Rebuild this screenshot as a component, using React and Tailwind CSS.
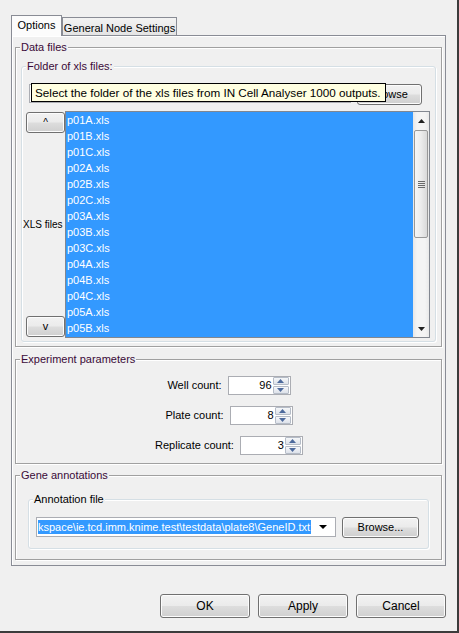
import React from "react";

const files = [
  "p01A.xls","p01B.xls","p01C.xls","p02A.xls","p02B.xls","p02C.xls","p03A.xls",
  "p03B.xls","p03C.xls","p04A.xls","p04B.xls","p04C.xls","p05A.xls","p05B.xls",
];

const btn =
  "flex items-center justify-center rounded-[3px] border border-[#707070] bg-[linear-gradient(#f2f2f2_0%,#ebebeb_48%,#dddddd_52%,#cfcfcf_100%)] shadow-[inset_0_0_0_1px_#fcfcfc] text-black";

function Group({ title, className, children }) {
  return (
    <div className={"relative border border-[#a0a0a0] shadow-[inset_1px_1px_0_#fff,1px_1px_0_#fff] " + className}>
      <span className="absolute left-[4px] top-[-8px] px-[1px] leading-[14px] bg-[#f0f0f0] text-[#3a0a38]">
        {title}
      </span>
      {children}
    </div>
  );
}

function Inner({ title, titleColor, className, children }) {
  return (
    <div className={"relative rounded-[3px] border border-[#d5dfe5] shadow-[inset_1px_1px_0_#fff,1px_1px_0_#fff] " + className}>
      <span className={"absolute left-[4px] top-[-8px] px-[1px] leading-[14px] bg-[#f0f0f0] " + titleColor}>
        {title}
      </span>
      {children}
    </div>
  );
}

function Spinner({ value }) {
  return (
    <div className="flex h-[19px] w-[63px] items-center border border-[#abadb3] bg-white">
      <span className="flex-1 pr-[1px] text-right leading-[17px]">{value}</span>
      <div className="mr-[1px] flex h-[17px] w-[16px] flex-col gap-[1px]">
        <div className="flex h-[8px] items-center justify-center rounded-[1px] border border-[#b5bcc7] bg-[linear-gradient(#f6f7f9,#dde2ea)]">
          <svg width="7" height="4" viewBox="0 0 7 4"><path d="M0 4 L3.5 0 L7 4 Z" fill="#4d6a9c" /></svg>
        </div>
        <div className="flex h-[8px] items-center justify-center rounded-[1px] border border-[#b5bcc7] bg-[linear-gradient(#f6f7f9,#dde2ea)]">
          <svg width="7" height="4" viewBox="0 0 7 4"><path d="M0 0 L3.5 4 L7 0 Z" fill="#4d6a9c" /></svg>
        </div>
      </div>
    </div>
  );
}

function Row({ label, value }) {
  return (
    <div className="flex h-[19px] items-center justify-center gap-[6px]">
      <span className="text-black">{label}</span>
      <Spinner value={value} />
    </div>
  );
}

export default function App() {
  return (
    <div className="relative flex h-[633px] w-[459px] flex-col overflow-hidden border-b-2 border-r-2 border-[#3c3c3c] bg-[#f0f0f0] pl-[11px] pt-[15px] font-['Liberation_Sans',Arial,sans-serif] text-[11px] text-black">
      {/* Tabs */}
      <div className="flex h-[21px] items-end">
        <div className="relative z-10 flex h-[21px] w-[51px] items-center justify-center border border-b-0 border-[#898c95] bg-[#fcfcfc] pb-[1px]">
          Options
        </div>
        <div className="flex h-[19px] w-[115px] items-center justify-center border border-b-0 border-[#898c95] bg-[linear-gradient(#f3f3f3,#e3e3e3)] pt-[2px]">
          General Node Settings
        </div>
      </div>

      {/* Panel */}
      <div className="mt-[-1px] flex h-[531px] w-[435px] flex-col border border-[#898c95] px-[3px] pt-[11px] shadow-[inset_1px_1px_0_#fff]">
        {/* Data files */}
        <Group title="Data files" className="h-[300px] px-[5px] pt-[18px]">
          <Inner title="Folder of xls files:" titleColor="text-[#3a0a38]" className="h-[276px] pt-[17px]">
            <div className="flex h-[21px] items-start pl-[7px]">
              <div className="h-[19px] w-[322px] border border-[#abadb3] bg-white" />
              <div className={btn + " ml-[6px] h-[21px] w-[65px]"}>Browse</div>
            </div>
            <div className="mt-[6px] flex h-[227px] pl-[1px]">
              <div className="flex w-[42px] flex-col items-end justify-between pb-[1px] pt-[1px]">
                <div className={btn + " h-[21px] w-[39px] text-[10px]"}>^</div>
                <span className="w-[42px] whitespace-nowrap text-left text-[10px] leading-[14px]">XLS files</span>
                <div className={btn + " h-[21px] w-[39px]"}>v</div>
              </div>
              <div className="flex h-[227px] w-[365px] border border-[#828790] bg-white">
                <div className="flex flex-1 flex-col bg-[#3399ff] text-white">
                  {files.map((f) => (
                    <div key={f} className="h-[16px] pl-[1px] leading-[16px]">{f}</div>
                  ))}
                </div>
                <div className="flex w-[16px] flex-col items-center bg-[linear-gradient(90deg,#e6e6e6,#f4f4f4_25%,#f4f4f4_75%,#e9e9e9)]">
                  <div className="flex h-[18px] items-center justify-center">
                    <svg width="7" height="4" viewBox="0 0 7 4"><path d="M0 4 L3.5 0 L7 4 Z" fill="#222" /></svg>
                  </div>
                  <div className="flex h-[108px] w-[14px] flex-col items-center justify-center gap-[1px] rounded-[2px] border border-[#989898] bg-[linear-gradient(90deg,#f6f6f6,#ececec_50%,#d9d9d9)]">
                    <div className="h-[1px] w-[7px] bg-[#6a6a6a]" />
                    <div className="h-[1px] w-[7px] bg-[#6a6a6a]" />
                    <div className="h-[1px] w-[7px] bg-[#6a6a6a]" />
                    <div className="h-[1px] w-[7px] bg-[#6a6a6a]" />
                  </div>
                  <div className="flex-1" />
                  <div className="flex h-[17px] items-center justify-center">
                    <svg width="7" height="4" viewBox="0 0 7 4"><path d="M0 0 L3.5 4 L7 0 Z" fill="#222" /></svg>
                  </div>
                </div>
              </div>
            </div>
          </Inner>
        </Group>

        {/* Experiment parameters */}
        <Group title="Experiment parameters" className="mt-[12px] h-[105px] pt-[16px]">
          <div className="flex flex-col gap-[11px] pl-[1px]">
            <Row label="Well count:" value="96" />
            <Row label="Plate count:" value="8" />
            <Row label="Replicate count:" value="3" />
          </div>
        </Group>

        {/* Gene annotations */}
        <Group title="Gene annotations" className="mt-[11px] h-[85px] pl-[12px] pt-[23px]">
          <Inner title="Annotation file" titleColor="text-black" className="h-[50px] w-[401px] pt-[17px]">
            <div className="flex h-[21px] items-start pl-[7px]">
              <div className="flex h-[20px] w-[300px] items-center overflow-hidden border border-[#abadb3] bg-white pl-[1px]">
                <span className="whitespace-nowrap bg-[#3399ff] pr-[1px] leading-[14px] text-white">
                  kspace\ie.tcd.imm.knime.test\testdata\plate8\GeneID.txt
                </span>
                <div className="flex flex-1 items-center justify-center">
                  <svg width="8" height="4" viewBox="0 0 8 4"><path d="M0 0 L4 4 L8 0 Z" fill="#000" /></svg>
                </div>
              </div>
              <div className={btn + " ml-[6px] h-[21px] w-[77px]"}>Browse...</div>
            </div>
          </Inner>
        </Group>
      </div>

      {/* Bottom buttons */}
      <div className="mt-[28px] flex justify-end gap-[8px] pr-[11px]">
        <div className={btn + " h-[24px] w-[90px] text-[12px]"}>OK</div>
        <div className={btn + " h-[24px] w-[90px] text-[12px]"}>Apply</div>
        <div className={btn + " h-[24px] w-[90px] text-[12px]"}>Cancel</div>
      </div>

      {/* Tooltip */}
      <div className="absolute left-[31px] top-[83px] z-20 h-[19px] w-[355px] whitespace-nowrap border border-black bg-[#ffffe1] pl-[3px] text-[11.7px] leading-[17px]">
        Select the folder of the xls files from IN Cell Analyser 1000 outputs.
      </div>
    </div>
  );
}
